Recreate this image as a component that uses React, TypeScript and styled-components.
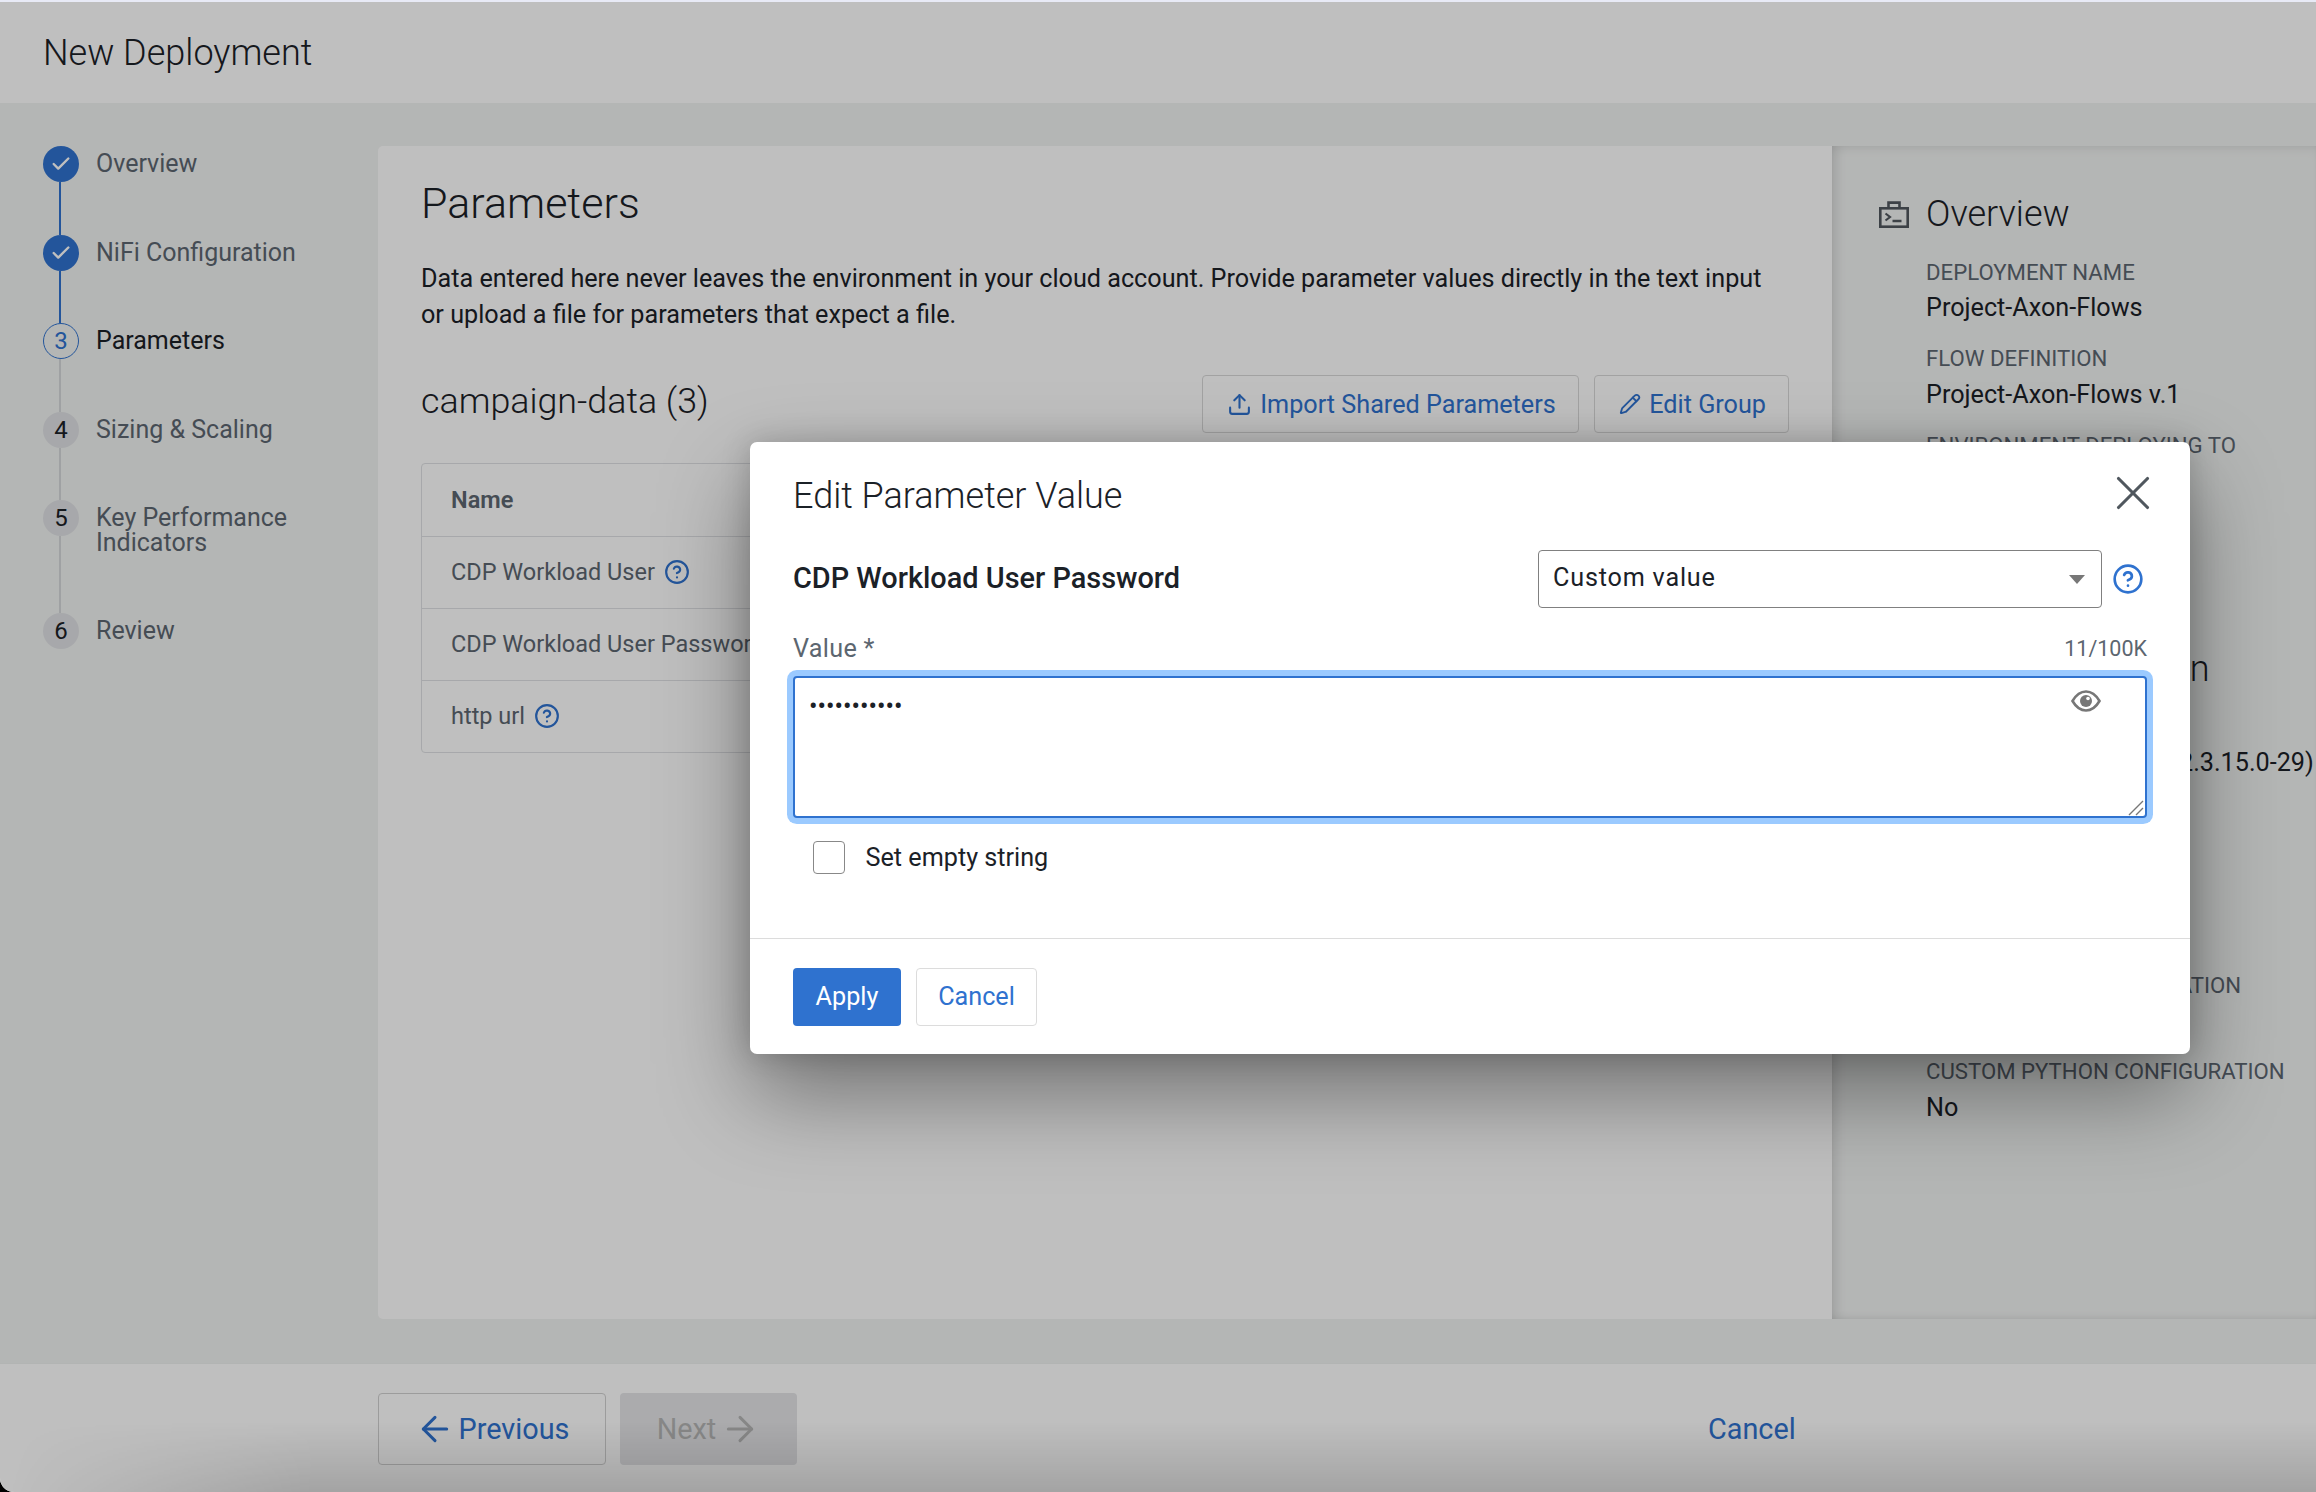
import React from "react";
import styled, { createGlobalStyle } from "styled-components";
import { ArrowLeft, ArrowRight, Check, CircleHelp, Pencil, Upload, X } from "lucide-react";

const Global = createGlobalStyle`
  html, body { margin: 0; padding: 0; width: 2316px; height: 1492px; overflow: hidden; background: #000; }
  body { font-family: Roboto, "Liberation Sans", sans-serif; color: #1b2127; }
  * { box-sizing: border-box; }
`;

const Page = styled.div`
  position: relative;
  width: 2316px;
  height: 1492px;
  display: flex;
  flex-direction: column;
  background: #f1f3f2;
  border-top: 2px solid #e8eaf6;
  border-bottom-left-radius: 14px;
  overflow: hidden;
`;
const Header = styled.header`
  height: 101px;
  flex: none;
  background: #fff;
  display: flex;
  align-items: center;
  padding: 0 0 0 43px;
`;
const PageTitle = styled.h1`
  margin: 0;
  font-size: 36px;
  font-weight: 300;
  color: #1b2127;
`;
const Body = styled.div`
  flex: 1;
  min-height: 0;
  display: flex;
  padding-top: 43px;
  padding-bottom: 44px;
`;
const Stepper = styled.nav`
  width: 378px;
  flex: none;
  padding-left: 43px;
  display: flex;
  flex-direction: column;
`;
const Step = styled.div<{ $h: number }>`
  height: ${(p) => p.$h}px;
  flex: none;
  display: flex;
  gap: 17px;
`;
const Rail = styled.div`
  width: 36px;
  display: flex;
  flex-direction: column;
  align-items: center;
`;
const Dot = styled.div<{ $kind: "done" | "active" | "todo" }>`
  width: 36px;
  height: 36px;
  flex: none;
  border-radius: 50%;
  display: flex;
  align-items: center;
  justify-content: center;
  font-size: 24px;
  color: ${(p) => (p.$kind === "active" ? "#2f72cf" : p.$kind === "todo" ? "#1b2127" : "#fff")};
  background: ${(p) => (p.$kind === "done" ? "#2f72cf" : p.$kind === "todo" ? "#dfe1e4" : "transparent")};
  border: ${(p) => (p.$kind === "active" ? "1.5px solid #2f72cf" : "none")};
`;
const RailLine = styled.div<{ $on: boolean }>`
  flex: 1;
  width: 2px;
  margin-left: -3px;
  background: ${(p) => (p.$on ? "#2f72cf" : "#d5d7da")};
`;
const StepLabel = styled.div<{ $active: boolean }>`
  width: 240px;
  padding-top: 5px;
  font-size: 25px;
  line-height: 25px;
  color: ${(p) => (p.$active ? "#1b2127" : "#5c6670")};
`;
const Main = styled.main`
  width: 1454px;
  flex: none;
  background: #fff;
  border-radius: 5px 0 0 5px;
  padding: 30px 43px 0 43px;
`;
const MainTitle = styled.h2`
  margin: 0;
  font-size: 43px;
  line-height: 54px;
  font-weight: 300;
`;
const Lead = styled.p`
  margin: 31px 0 0;
  max-width: 1350px;
  font-size: 25.2px;
  line-height: 36px;
  color: #1b2127;
`;
const GroupBar = styled.div`
  margin-top: 42px;
  height: 58px;
  display: flex;
  align-items: center;
  justify-content: space-between;
`;
const GroupTitle = styled.h3`
  margin: 0 0 6px;
  font-size: 35.8px;
  font-weight: 300;
`;
const GroupActions = styled.div`
  display: flex;
  gap: 15px;
`;
const OutlineBtn = styled.button`
  height: 58px;
  padding: 0 22px 0 24.5px;
  display: flex;
  align-items: center;
  gap: 8px;
  background: transparent;
  border: 1.5px solid #d8d8d8;
  border-radius: 4px;
  font: 400 25.2px Roboto, sans-serif;
  color: #2f72cf;
`;
const Table = styled.div`
  margin-top: 30px;
  border: 1.5px solid #dfe1e4;
  border-radius: 4px;
`;
const Row = styled.div<{ $head?: boolean }>`
  height: 72px;
  padding: 0 0 ${(p) => (p.$head ? 0 : 2)}px 29px;
  display: flex;
  align-items: center;
  gap: 9px;
  font-size: 23.5px;
  font-weight: ${(p) => (p.$head ? 600 : 400)};
  color: #5c6670;
  & + & { border-top: 1.5px solid #dfe1e4; }
`;
const Side = styled.aside`
  flex: 1;
  min-width: 0;
  padding: 43px 0 0 46px;
  box-shadow: inset 10px 0 12px -6px rgba(0, 0, 0, 0.12), inset 0 8px 12px -6px rgba(0, 0, 0, 0.08),
    inset 0 -6px 10px -6px rgba(0, 0, 0, 0.1);
  white-space: nowrap;
`;
const SideHead = styled.div`
  display: flex;
  align-items: center;
  gap: 17px;
  height: 50px;
  font-size: 36px;
  font-weight: 300;
  & > svg { margin-left: 1px; }
`;
const SideList = styled.div`
  padding: 0 0 0 48px;
`;
const Item = styled.div`
  padding-top: 17.5px;
  height: 86.5px;
`;
const ItemLabel = styled.div`
  font-size: 22.2px;
  line-height: 30px;
  color: #5c6670;
`;
const ItemValue = styled.div`
  margin-top: 3.5px;
  font-size: 25.2px;
  line-height: 36px;
  color: #1b2127;
`;
const SectionHead = styled.div`
  margin: 145px 0 0 48px;
  height: 50px;
  line-height: 50px;
  font-size: 36px;
  font-weight: 300;
`;
const Gap = styled.div<{ $h: number }>`
  height: ${(p) => p.$h}px;
`;
const Footer = styled.footer`
  height: 129px;
  flex: none;
  background: #fff;
  border-top: 1px solid #eef0ef;
  padding: 29px 0 0 378px;
  display: flex;
  align-items: flex-start;
`;
const FootBtn = styled.button`
  height: 72px;
  width: 228px;
  display: flex;
  align-items: center;
  justify-content: center;
  gap: 4px;
  background: transparent;
  border: 1.5px solid #d0d0d0;
  border-radius: 4px;
  font: 400 28.8px Roboto, sans-serif;
  color: #2f72cf;
`;
const NextBtn = styled(FootBtn)`
  width: 177px;
  margin-left: 14px;
  border: none;
  background: #e4e5e7;
  color: #b5b5b5;
`;
const FootCancel = styled.button`
  margin: 0 0 0 911px;
  height: 72px;
  padding: 0;
  border: none;
  background: none;
  font: 400 28.8px Roboto, sans-serif;
  color: #2f72cf;
`;
const Overlay = styled.div`
  position: absolute;
  inset: 0;
  background: rgba(0, 0, 0, 0.25);
`;
const BottomShade = styled.div`
  position: absolute;
  left: 0;
  right: 0;
  bottom: 0;
  height: 70px;
  background: linear-gradient(to bottom, rgba(0, 0, 0, 0), rgba(0, 0, 0, 0.14));
  -webkit-mask-image: linear-gradient(100deg, transparent 20px, #000 320px);
  mask-image: linear-gradient(100deg, transparent 20px, #000 320px);
`;
const Dialog = styled.div`
  position: absolute;
  left: 750px;
  top: 440px;
  width: 1440px;
  height: 612px;
  background: #fff;
  border-radius: 7px;
  box-shadow: 0 40px 90px rgba(0, 0, 0, 0.4), 0 0 30px rgba(0, 0, 0, 0.18);
  display: flex;
  flex-direction: column;
`;
const DialogHead = styled.div`
  height: 108px;
  flex: none;
  padding: 0 28px 0 43px;
  display: flex;
  align-items: center;
  justify-content: space-between;
`;
const DialogTitle = styled.h2`
  margin: 0;
  font-size: 36px;
  font-weight: 300;
  color: #1b2127;
`;
const CloseBtn = styled.button`
  padding: 0;
  margin: 0 0 6px;
  width: 58px;
  height: 58px;
  display: flex;
  align-items: center;
  justify-content: center;
  border: none;
  background: none;
  color: #50575e;
`;
const DialogBody = styled.div`
  flex: 1;
  padding: 0 43px;
`;
const ParamRow = styled.div`
  height: 58px;
  display: flex;
  align-items: center;
`;
const ParamName = styled.div`
  flex: 1;
  margin-bottom: 2px;
  font-size: 28.9px;
  font-weight: 500;
  color: #1b2127;
`;
const Select = styled.div`
  width: 564px;
  height: 58px;
  padding: 0 16px 4px 14px;
  display: flex;
  align-items: center;
  justify-content: space-between;
  border: 1.5px solid #808080;
  border-radius: 4px;
  font-size: 25.2px;
  letter-spacing: 0.8px;
  color: #1b2127;
`;
const Caret = styled.span`
  width: 0;
  height: 0;
  margin-top: 4px;
  border-left: 8.5px solid transparent;
  border-right: 8.5px solid transparent;
  border-top: 9px solid #777;
`;
const SelectHelp = styled.span`
  margin: 0 3px 0 10px;
  display: flex;
  color: #2f72cf;
`;
const FieldHead = styled.div`
  margin-top: 25px;
  height: 30px;
  display: flex;
  align-items: center;
  justify-content: space-between;
`;
const FieldLabel = styled.span`
  font-size: 25.2px;
  letter-spacing: 0.3px;
  color: #5c6670;
`;
const Counter = styled.span`
  font-size: 21.5px;
  color: #5c6670;
`;
const FieldWrap = styled.div`
  position: relative;
  margin-top: 13px;
  height: 142px;
`;
const Field = styled.textarea`
  display: block;
  width: 1354px;
  height: 142px;
  padding: 11px 14px;
  border: 2px solid #2f72cf;
  border-radius: 4px;
  outline: none;
  resize: none;
  box-shadow: 0 0 0 6px #9bcaff;
  font: 400 25.2px/36px Roboto, sans-serif;
  color: #1b2127;
  background: #fff;
`;
const EyeBtn = styled.span`
  position: absolute;
  right: 46px;
  top: 13px;
  display: flex;
  color: #777;
`;
const Grip = styled.svg`
  position: absolute;
  right: 3px;
  bottom: 2px;
`;
const CheckRow = styled.label`
  margin: 23px 0 0 20px;
  display: flex;
  align-items: center;
  gap: 20.5px;
  font-size: 25.2px;
  color: #1b2127;
`;
const Box = styled.span`
  width: 32px;
  height: 33px;
  border: 1.5px solid #888;
  border-radius: 4px;
  background: #fff;
`;
const DialogFoot = styled.div`
  height: 116px;
  flex: none;
  padding: 29px 43px 0;
  border-top: 1.5px solid #dcdcdc;
  display: flex;
  gap: 15px;
  align-items: flex-start;
`;
const ApplyBtn = styled.button`
  width: 108px;
  height: 58px;
  padding: 0 0 2px;
  border: none;
  border-radius: 4px;
  background: #2f72cf;
  color: #fff;
  font: 400 25.2px Roboto, sans-serif;
`;
const CancelBtn = styled.button`
  width: 121px;
  height: 58px;
  padding: 0 0 2px;
  border: 1.5px solid #dcdcdc;
  border-radius: 4px;
  background: #fff;
  color: #2f72cf;
  font: 400 25.2px Roboto, sans-serif;
`;
const Help = styled(CircleHelp)`
  color: #2f72cf;
  flex: none;
`;

const steps = [
  { n: 1, label: "Overview", kind: "done", h: 88.5, on: true },
  { n: 2, label: "NiFi Configuration", kind: "done", h: 88.5, on: true },
  { n: 3, label: "Parameters", kind: "active", h: 88.5, on: false },
  { n: 4, label: "Sizing & Scaling", kind: "todo", h: 88.5, on: false },
  { n: 5, label: "Key Performance Indicators", kind: "todo", h: 113, on: false },
  { n: 6, label: "Review", kind: "todo", h: 40, on: false },
] as const;

const TerminalCase = () => (
  <svg width="30" height="27" viewBox="0 0 30 27" fill="none" stroke="#50575e" strokeWidth="2.6">
    <rect x="1.3" y="7.3" width="27.4" height="18.4" />
    <path d="M9.5 7V1.6h11V7" />
    <path d="M6.5 12.5l4.5 3.5-4.5 3.5" strokeWidth="2.2" />
    <path d="M13.5 20h9" strokeWidth="2.6" />
  </svg>
);

const Eye = () => (
  <svg width="30" height="24" viewBox="0 0 30 24" fill="none">
    <path d="M1.5 12C5 6 9.5 2.5 15 2.5S25 6 28.5 12C25 18 20.5 21.5 15 21.5S5 18 1.5 12Z" stroke="currentColor" strokeWidth="2.6" />
    <circle cx="15" cy="12" r="6" fill="currentColor" />
    <circle cx="17" cy="9.5" r="1.8" fill="#fff" />
  </svg>
);

export default function App() {
  return (
    <>
      <Global />
      <Page>
        <Header>
          <PageTitle>New Deployment</PageTitle>
        </Header>
        <Body>
          <Stepper>
            {steps.map((s, i) => (
              <Step key={s.n} $h={s.h}>
                <Rail>
                  <Dot $kind={s.kind}>{s.kind === "done" ? <Check size={22} strokeWidth={2.6} /> : s.n}</Dot>
                  {i < steps.length - 1 && <RailLine $on={s.on} />}
                </Rail>
                <StepLabel $active={s.kind === "active"}>{s.label}</StepLabel>
              </Step>
            ))}
          </Stepper>
          <Main>
            <MainTitle>Parameters</MainTitle>
            <Lead>
              Data entered here never leaves the environment in your cloud account. Provide parameter values directly in
              the text input or upload a file for parameters that expect a file.
            </Lead>
            <GroupBar>
              <GroupTitle>campaign-data (3)</GroupTitle>
              <GroupActions>
                <OutlineBtn>
                  <Upload size={25} strokeWidth={2} />
                  Import Shared Parameters
                </OutlineBtn>
                <OutlineBtn>
                  <Pencil size={22} strokeWidth={2} />
                  Edit Group
                </OutlineBtn>
              </GroupActions>
            </GroupBar>
            <Table>
              <Row $head>Name</Row>
              <Row>
                CDP Workload User <Help size={26} strokeWidth={2} />
              </Row>
              <Row>CDP Workload User Password</Row>
              <Row>
                http url <Help size={26} strokeWidth={2} />
              </Row>
            </Table>
          </Main>
          <Side>
            <SideHead>
              <TerminalCase />
              Overview
            </SideHead>
            <SideList>
              <Item>
                <ItemLabel>DEPLOYMENT NAME</ItemLabel>
                <ItemValue>Project-Axon-Flows</ItemValue>
              </Item>
              <Item>
                <ItemLabel>FLOW DEFINITION</ItemLabel>
                <ItemValue>Project-Axon-Flows v.1</ItemValue>
              </Item>
              <Item>
                <ItemLabel>ENVIRONMENT DEPLOYING TO</ItemLabel>
              </Item>
            </SideList>
            <SectionHead>NiFi Configuration</SectionHead>
            <SideList>
              <Item>
                <ItemLabel>NIFI VERSION</ItemLabel>
                <ItemValue>Apache NiFi 2: (1.28.1.2.3.15.0-29)</ItemValue>
              </Item>
              <Gap $h={172} />
              <Item>
                <ItemLabel>CUSTOM NAR CONFIGURATION</ItemLabel>
              </Item>
              <Item>
                <ItemLabel>CUSTOM PYTHON CONFIGURATION</ItemLabel>
                <ItemValue>No</ItemValue>
              </Item>
            </SideList>
          </Side>
        </Body>
        <Footer>
          <FootBtn>
            <ArrowLeft size={40} strokeWidth={1.8} />
            Previous
          </FootBtn>
          <NextBtn>
            Next
            <ArrowRight size={40} strokeWidth={1.8} />
          </NextBtn>
          <FootCancel>Cancel</FootCancel>
        </Footer>
        <Overlay />
        <BottomShade />
        <Dialog>
          <DialogHead>
            <DialogTitle>Edit Parameter Value</DialogTitle>
            <CloseBtn>
              <X size={58} strokeWidth={1.3} />
            </CloseBtn>
          </DialogHead>
          <DialogBody>
            <ParamRow>
              <ParamName>CDP Workload User Password</ParamName>
              <Select>
                Custom value
                <Caret />
              </Select>
              <SelectHelp>
                <CircleHelp size={32} strokeWidth={2} />
              </SelectHelp>
            </ParamRow>
            <FieldHead>
              <FieldLabel>Value *</FieldLabel>
              <Counter>11/100K</Counter>
            </FieldHead>
            <FieldWrap>
              <Field defaultValue="•••••••••••" />
              <EyeBtn>
                <Eye />
              </EyeBtn>
              <Grip width="16" height="16" viewBox="0 0 16 16" stroke="#777" strokeWidth="1.4">
                <path d="M1 15L15 1M8 15l7-7" />
              </Grip>
            </FieldWrap>
            <CheckRow>
              <Box />
              Set empty string
            </CheckRow>
          </DialogBody>
          <DialogFoot>
            <ApplyBtn>Apply</ApplyBtn>
            <CancelBtn>Cancel</CancelBtn>
          </DialogFoot>
        </Dialog>
      </Page>
    </>
  );
}
